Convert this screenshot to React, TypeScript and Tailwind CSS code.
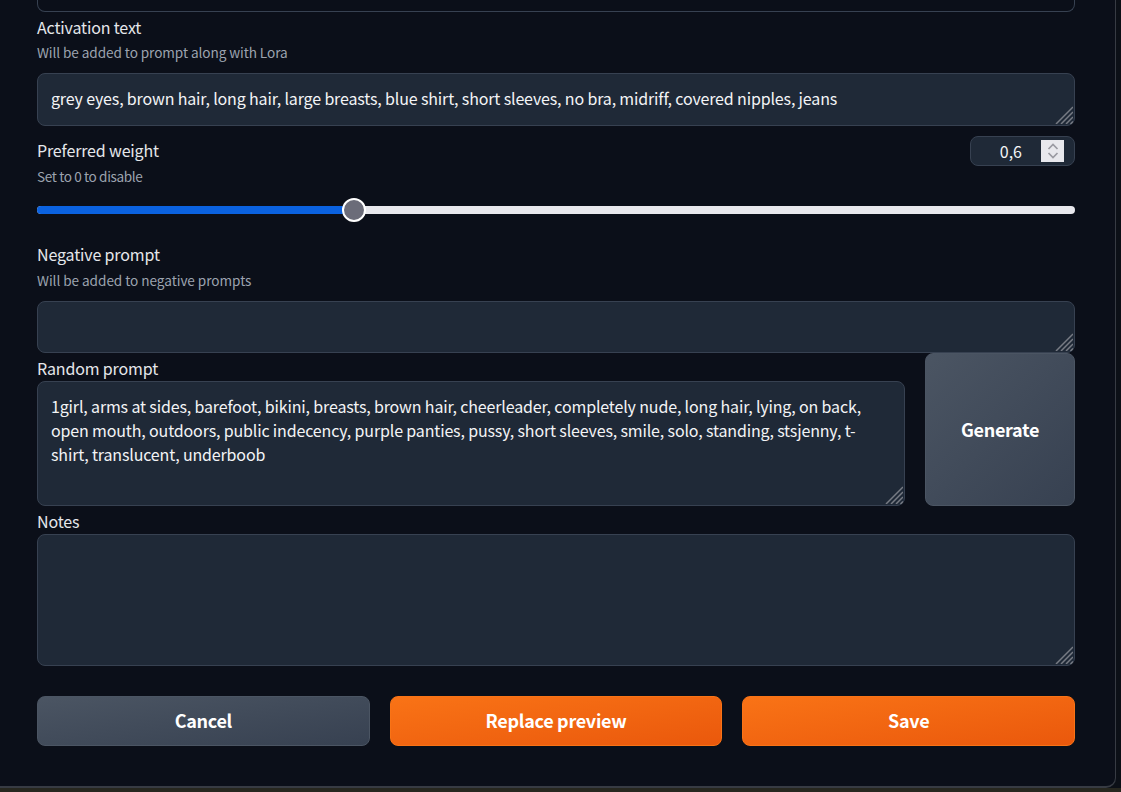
const FONT = "font-['Noto_Sans_CJK_SC','Noto_Sans',sans-serif]";

function Grip() {
  return (
    <svg className="absolute bottom-[1px] right-[1px]" width="18" height="18" viewBox="0 0 18 18">
      <path d="M18 1 1 18M18 6 6 18M18 11 11 18M18 15.500 15.500 18" stroke="#777b84" strokeWidth="1.5" fill="none" />
    </svg>
  );
}

function Box({ className, text }: { className: string; text?: string }) {
  return (
    <div className={`relative rounded-[8px] border border-[#374151] bg-[#1f2937] px-[13px] pb-[13px] pt-[12px] text-[16px] leading-[24px] tracking-[-0.15px] text-[#f3f4f6] ${className}`}>
      {text}
      <Grip />
    </div>
  );
}

const PLAIN_LABEL = "h-[20px] text-[16px] leading-[20px] tracking-[-0.15px] text-[#e5e7eb]";
const HINT = "h-[20px] text-[13.6px] leading-[20px] text-[#9ca3af]";
const BTN = "h-[50px] flex-1 rounded-[8px] border pb-[2px] text-[18px] font-semibold tracking-[-0.3px] text-white bg-gradient-to-br";

export default function App() {
  return (
    <div className={`h-[792px] w-[1121px] overflow-hidden bg-[#0c1017] ${FONT}`}>
      <div className="h-[788px] w-[1116px] rounded-br-[10px] border-b-2 border-r border-[#373b43] bg-[#0b0f19] px-[37px]">
        <div className="h-[12px] w-[1038px] rounded-b-[8px] border-x border-b border-[#374151]" />
        <div className="mt-[5px] w-[1038px]">
          <div className={PLAIN_LABEL}>Activation text</div>
          <div className={`mt-[5px] tracking-[-0.08px] ${HINT}`}>Will be added to prompt along with Lora</div>
          <Box className="mt-[11px] h-[53px] w-full" text="grey eyes, brown hair, long hair, large breasts, blue shirt, short sleeves, no bra, midriff, covered nipples, jeans" />

          <div className="mt-[10px] flex h-[30px] items-start justify-between">
            <div className={`mt-[4px] ${PLAIN_LABEL}`}>Preferred weight</div>
            <div className="flex h-[30px] w-[105px] items-center justify-end rounded-[8px] border border-[#374151] bg-[#1f2937] pr-[10px] text-[16px] text-[#f3f4f6]">
              <span className="mr-[19px]">0,6</span>
              <div className="flex h-[22px] w-[23px] flex-col items-center justify-center gap-[2px] bg-[#e8e8ed]">
                <svg width="12" height="7" viewBox="0 0 12 7"><path d="M1.500 6 6 1.500 10.500 6" fill="none" stroke="#9a9aa2" strokeWidth="1.700" /></svg>
                <svg width="12" height="7" viewBox="0 0 12 7"><path d="M1.500 1 6 5.500 10.500 1" fill="none" stroke="#9a9aa2" strokeWidth="1.700" /></svg>
              </div>
            </div>
          </div>
          <div className={`tracking-[-0.38px] ${HINT}`}>Set to 0 to disable</div>

          <div className="relative mt-[20px] flex h-[8px] w-full rounded-[4px] bg-[#e8e8ed]">
            <div className="h-full w-[316px] rounded-l-[4px] bg-[#0b62e0]" />
            <div className="absolute left-[304.500px] top-[-8px] h-[24px] w-[24px] rounded-full border-2 border-white bg-[#6b6c79]" />
          </div>

          <div className={`mt-[30px] ${PLAIN_LABEL}`}>Negative prompt</div>
          <div className={`mt-[6px] tracking-[-0.05px] ${HINT}`}>Will be added to negative prompts</div>
          <Box className="mt-[11px] h-[52px] w-full" />

          <div className="flex w-full gap-[20px]">
            <div className="w-[868px]">
              <div className={`mt-[5px] ${PLAIN_LABEL}`}>Random prompt</div>
              <Box className="mt-[3px] h-[125px] w-full" text="1girl, arms at sides, barefoot, bikini, breasts, brown hair, cheerleader, completely nude, long hair, lying, on back, open mouth, outdoors, public indecency, purple panties, pussy, short sleeves, smile, solo, standing, stsjenny, t-shirt, translucent, underboob" />
            </div>
            <button className="flex h-[153px] w-[150px] items-center justify-center rounded-[8px] border border-[#4b5563] bg-gradient-to-br from-[#4b5563] to-[#374151] text-[18px] font-semibold tracking-[-0.3px] text-white">
              Generate
            </button>
          </div>

          <div className={`mt-[5px] ${PLAIN_LABEL}`}>Notes</div>
          <Box className="mt-[3px] h-[132px] w-full" />

          <div className="mt-[30px] flex w-full gap-[20px]">
            <button className={`${BTN} border-[#4b5563] from-[#4b5563] to-[#374151]`}>Cancel</button>
            <button className={`${BTN} border-[#f97316] from-[#f97316] to-[#ea580c]`}>Replace preview</button>
            <button className={`${BTN} border-[#f97316] from-[#f97316] to-[#ea580c]`}>Save</button>
          </div>
        </div>
      </div>
      <div className="h-[4px] w-full bg-[#27271f]" />
    </div>
  );
}
